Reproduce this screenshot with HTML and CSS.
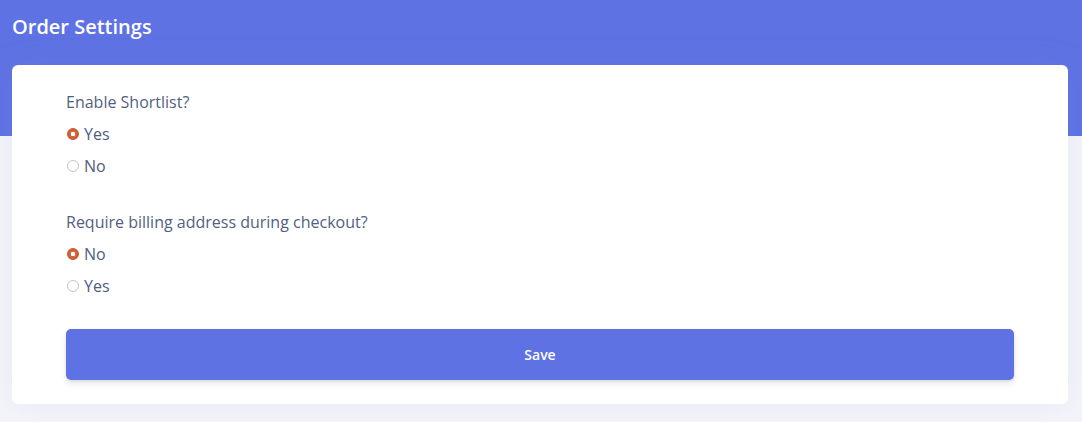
FILE: index.html
```html
<!DOCTYPE html>
<html>
<head>
    <title>Order Settings</title>
    <link rel="stylesheet" href="styles.css">
</head>
<body>
    <div class="page">
        <h1 class="page-title">Order Settings</h1>
        <form class="card">
            <div class="field">
                <div class="field-label">Enable Shortlist?</div>
                <label class="radio-row"><input type="radio" name="shortlist" checked> Yes</label>
                <label class="radio-row"><input type="radio" name="shortlist"> No</label>
            </div>
            <div class="field">
                <div class="field-label">Require billing address during checkout?</div>
                <label class="radio-row"><input type="radio" name="billing" checked> No</label>
                <label class="radio-row"><input type="radio" name="billing"> Yes</label>
            </div>
            <button type="button" class="save-button">Save</button>
        </form>
    </div>
</body>
</html>
```

FILE: styles.css
```css
body {
    margin: 0;
    font-family: 'Open Sans', 'Noto Sans', sans-serif;
    color: #525f7f;
    background: #f4f5fb;
}
.page {
    min-height: 422px;
    padding: 0 14px 0 12px;
    box-sizing: border-box;
    /* blue band behind the top of the card */
    background: linear-gradient(#5e72e4 0, #5e72e4 136px, #f4f5fb 136px);
}
.page-title {
    margin: 0;
    height: 65px;
    padding-top: 12px;
    box-sizing: border-box;
    color: #fff;
    font-size: 20px;
    font-weight: 600;
    line-height: 30px;
}
.card {
    background: #fff;
    border-radius: 6px;
    padding: 25px 54px 24px 54px;
    box-shadow: 0 0 2rem 0 rgba(136, 152, 170, 0.12);
}
.field {
    margin-bottom: 28px;
}
.field + .field {
    margin-bottom: 27px;
}
.field-label {
    font-size: 16px;
    line-height: 24px;
    margin-bottom: 4px;
}
.radio-row {
    display: flex;
    align-items: center;
    height: 32px;
    font-size: 16px;
    color: #4e5d80;
}
.radio-row input {
    appearance: none;
    width: 12px;
    height: 12px;
    margin: 0 5px 0 1px;
    border: 1px solid #c4c4c4;
    border-radius: 50%;
    background: #fff;
}
.radio-row input:checked {
    border-color: #c8582c;
    background: radial-gradient(circle, #fff 0, #fff 2px, #d4673c 2.5px, #c9592d 6px);
}
.save-button {
    display: block;
    width: 100%;
    height: 51px;
    border: none;
    border-radius: 5px;
    background-color: #5e72e4;
    color: #fff;
    font-family: 'Open Sans', 'Noto Sans', sans-serif;
    font-size: 14px;
    font-weight: 600;
    box-shadow: 0 4px 6px rgba(50, 50, 93, 0.11), 0 1px 3px rgba(0, 0, 0, 0.08);
}
```
